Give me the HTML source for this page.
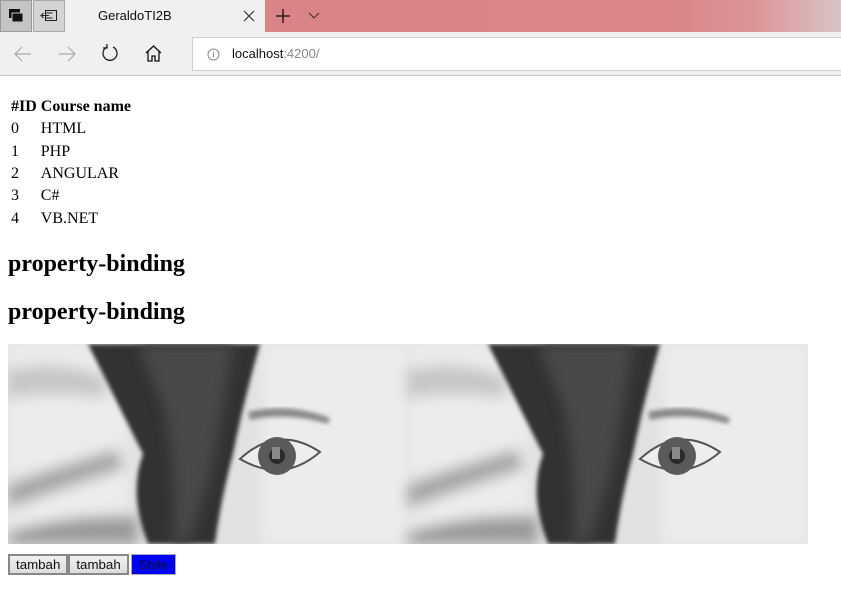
<!DOCTYPE html>
<html><head><meta charset="utf-8"><style>
*{margin:0;padding:0;box-sizing:border-box}
body{width:841px;height:602px;background:#fff;position:relative;overflow:hidden;font-family:"Liberation Serif",serif}
.tabbar{position:absolute;left:0;top:0;width:841px;height:32px;background:#f0f0f0}
.pink{position:absolute;left:265px;top:0;right:0;height:32px;background:linear-gradient(90deg,#da8487 0%,#da8589 70%,#dd9497 85%,#d8c5c6 100%)}
.tb{position:absolute;left:0;top:32px;width:841px;height:44px;background:#f0f0f0;border-bottom:1px solid #c8c8c8}
.addr{position:absolute;left:192px;top:37px;width:660px;height:34px;background:#fff;border:1px solid #cfcfcf}
.sans{font-family:"Liberation Sans",sans-serif}
table{position:absolute;left:8px;top:95px;border-collapse:separate;border-spacing:2px;font-size:16px}
td,th{padding:1px;text-align:left;height:20.3px}
h2{position:absolute;left:8px;font-size:24px;font-weight:bold}
.imgs{position:absolute;left:8px;top:344px;height:200px;width:800px}
.btns{position:absolute;left:8px;top:554px;display:flex}
.btn{font-family:"Liberation Sans",sans-serif;font-size:13.3px;height:21px;padding:1px 6px;border-color:#888;border-width:2px;border-style:solid;background:linear-gradient(#f0f0f0,#dcdcdc);line-height:15px;color:#111}
</style></head><body>
<div class="tabbar">
 <div style="position:absolute;left:0;top:0;width:32px;height:32px;background:#c4c4c4;border:1px solid #999"></div>
 <svg style="position:absolute;left:8px;top:8px" width="16" height="16"><rect x="1" y="1" width="11" height="9" fill="#111"/><rect x="4" y="5" width="11" height="9" fill="#111" stroke="#c4c4c4" stroke-width="1"/></svg>
 <div style="position:absolute;left:33px;top:0;width:32px;height:32px;background:#d4d4d4;border:1px solid #aaa"></div>
 <svg style="position:absolute;left:40px;top:9px" width="18" height="14" fill="none" stroke="#222" stroke-width="1"><rect x="5.5" y="1.5" width="11" height="10"/><path d="M1 6.5h8M3.5 4l-2.5 2.5 2.5 2.5M5.5 4h7M5.5 9h7"/></svg>
 <div class="sans" style="position:absolute;left:98px;top:8px;font-size:13px;color:#111">GeraldoTI2B</div>
 <svg style="position:absolute;left:243px;top:10px" width="12" height="12" stroke="#333" stroke-width="1.2"><path d="M1 1L11 11M11 1L1 11"/></svg>
</div>
<div class="pink"><svg style="position:absolute;left:11px;top:9px" width="14" height="14" stroke="#111" stroke-width="1.3"><path d="M7 0v14M0 7h14"/></svg><svg style="position:absolute;left:43px;top:12px" width="12" height="8" fill="none" stroke="#333" stroke-width="1.1"><path d="M1 1l5 5 5-5"/></svg></div>
<div class="tb">
 <svg style="position:absolute;left:14px;top:14px" width="18" height="16" fill="none" stroke="#aaa" stroke-width="1.2"><path d="M1 8h16M8 1L1 8l7 7"/></svg>
 <svg style="position:absolute;left:58px;top:14px" width="18" height="16" fill="none" stroke="#aaa" stroke-width="1.2"><path d="M1 8h16M10 1l7 7-7 7"/></svg>
 <svg style="position:absolute;left:101px;top:12px" width="18" height="18" fill="none" stroke="#222" stroke-width="1.3"><path d="M6 3A7 7 0 1 0 12 3"/><path d="M6 0v4H2"/></svg>
 <svg style="position:absolute;left:145px;top:13px" width="17" height="17" fill="none" stroke="#111" stroke-width="1.3"><path d="M1 8L8.5 1 16 8M3 6.5V16h4v-5h3v5h4V6.5"/></svg>
</div>
<div class="addr">
 <svg style="position:absolute;left:14px;top:10px" width="13" height="13" fill="none" stroke="#888"><circle cx="6.5" cy="6.5" r="5.5"/><path d="M6.5 5.5v4M6.5 3.5v1"/></svg>
 <div class="sans" style="position:absolute;left:39px;top:8px;font-size:13px;color:#111">localhost<span style="color:#888">:4200/</span></div>
</div>
<table><tr><th>#ID</th><th>Course name</th></tr>
<tr><td>0</td><td>HTML</td></tr>
<tr><td>1</td><td>PHP</td></tr>
<tr><td>2</td><td>ANGULAR</td></tr>
<tr><td>3</td><td>C#</td></tr>
<tr><td>4</td><td>VB.NET</td></tr></table>
<h2 style="top:251px">property-binding</h2>
<h2 style="top:299px">property-binding</h2>
<svg class="imgs" width="800" height="200" viewBox="0 0 800 200">
<defs>
<filter id="bl"><feGaussianBlur stdDeviation="7"/></filter>
<filter id="bs"><feGaussianBlur stdDeviation="2"/></filter>
<g id="face">
<rect width="400" height="200" fill="#e2e2e2"/>
<g filter="url(#bl)">
<rect x="0" y="0" width="120" height="200" fill="#ececec"/>
<path d="M0 25 Q60 15 100 35 L95 55 Q50 45 0 55Z" fill="#c6c6c6"/>
<path d="M0 140 Q40 125 110 105 L115 125 Q50 145 0 165Z" fill="#a5a5a5"/>
<path d="M0 188 Q60 170 130 172 L130 200 L0 200Z" fill="#9a9a9a"/>
<rect x="255" y="0" width="145" height="200" fill="#ececec"/>
</g>
<path d="M80 0 L252 0 Q235 60 225 110 Q212 160 207 200 L140 200 Q120 150 135 110 Q110 60 80 0Z" fill="#333" filter="url(#bs)"/>
<path d="M130 0 L225 0 Q212 80 202 130 L180 200 L165 200 Q170 120 155 60Z" fill="#4a4a4a" filter="url(#bl)"/>
<path d="M240 68 Q280 58 322 74 L320 80 Q280 68 242 76Z" fill="#8a8a8a" filter="url(#bs)"/>
<path d="M232 115 Q270 80 312 108 Q275 140 232 115Z" fill="#eeeeee" stroke="#555" stroke-width="2"/>
<circle cx="269" cy="112" r="19" fill="#5a5a5a"/>
<circle cx="269" cy="112" r="8" fill="#2a2a2a"/>
<rect x="264" y="103" width="8" height="12" fill="#888"/>
</g>
</defs>
<use href="#face"/>
<use href="#face" x="400"/>
</svg>
<div class="btns"><div class="btn">tambah</div><div class="btn">tambah</div><div class="btn" style="background:#0000ff;border-color:#aab;border-width:1px;margin-left:2px;padding:2px 7px;color:#111">Style</div></div>
</body></html>
